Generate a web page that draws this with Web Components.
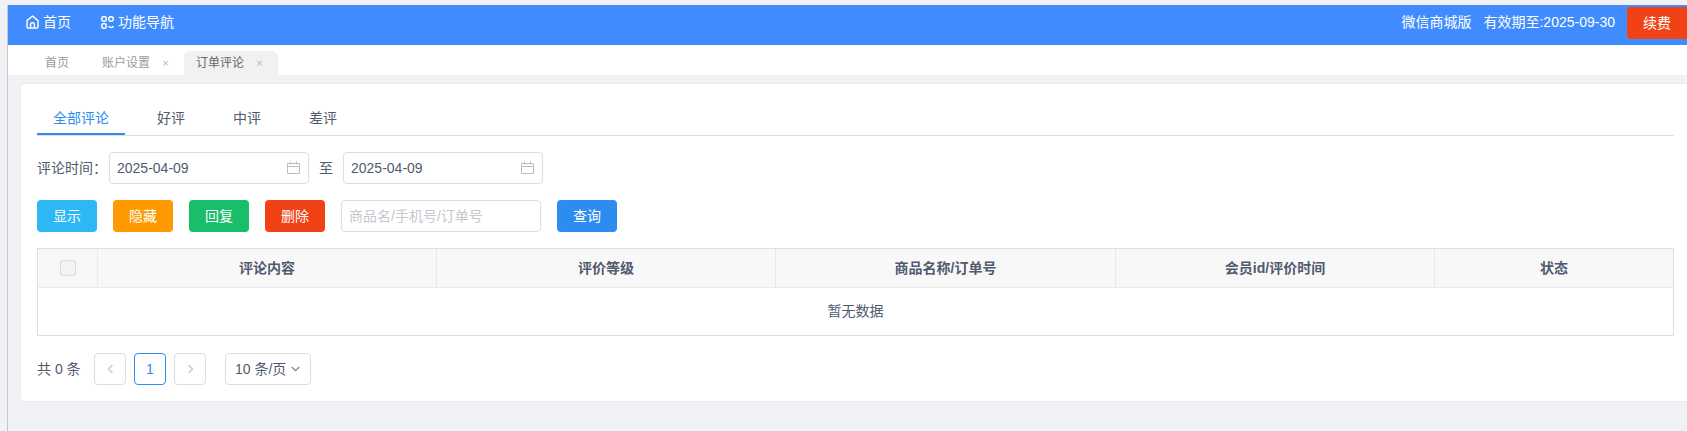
<!DOCTYPE html>
<html><head><meta charset="utf-8">
<style>
html,body{margin:0;padding:0;height:431px;overflow:hidden;background:#f0f2f5;}
body{font:14px/20px "Liberation Sans","Noto Sans CJK SC",sans-serif;color:#515a6e;}
app-shell{width:1687px;height:431px;}
</style></head><body>
<app-shell>
  <top-bar></top-bar>
  <tab-strip></tab-strip>
  <main-card>
    <card-tabs></card-tabs>
    <date-filter></date-filter>
    <action-row></action-row>
    <data-table></data-table>
    <pager-bar></pager-bar>
  </main-card>
</app-shell>
<script>
const def=(name,css,html)=>customElements.define(name,class extends HTMLElement{
  constructor(){super();this.attachShadow({mode:'open'}).innerHTML=`<style>${css}</style>${html}`;}
});
const CAL=`<svg width="13" height="13" viewBox="0 0 13 13" fill="none" stroke="#b9bdc6" stroke-width="1"><path d="M.5 2.5h12v10H.5zM.5 5.5h12M3.5.5v3M9.5.5v3"/></svg>`;

def('app-shell',`:host{display:block;box-sizing:border-box;padding-top:5px;padding-left:7px;background:#f0f2f5}
.w{border-left:1px solid #c6c8cc;height:426px;box-sizing:border-box;}
`,`<div class="w"><slot></slot></div>`);

def('top-bar',`:host{display:flex;height:40px;background:#408cff;color:#fff;font-size:14px;}
.l{display:flex;align-items:center;padding:0 0 6px 17px;}
.i{display:flex;align-items:center;gap:5px;}
.h{padding-left:1px;gap:4px}
.i+.i{margin-left:30px;gap:4px}
.r{margin-left:auto;display:flex;align-items:center;padding-bottom:6px;}
.b{margin-left:12px;margin-top:2px;width:60px;height:32px;background:#f14216;border-radius:3px 0 0 3px;display:flex;align-items:center;justify-content:center;}
.s{margin-left:12px}
svg{display:block}`,
`<div class="l"><div class="i h"><svg width="13" height="14" viewBox="0 0 13 14" fill="none" stroke="#fff" stroke-width="1.4" stroke-linejoin="round"><path d="M1 5.6 6.5 1 12 5.6V12a1 1 0 0 1-1 1H2a1 1 0 0 1-1-1z"/><path d="M4.6 13V9.6a1.9 1.9 0 0 1 3.8 0V13"/></svg><span>首页</span></div>
<div class="i"><svg width="13" height="13" viewBox="0 0 13 13" fill="none" stroke="#fff" stroke-width="1.5"><rect x=".8" y=".8" width="4.4" height="4.4" rx="1.4"/><rect x=".8" y="7.8" width="4.4" height="4.4" rx="1.4"/><circle cx="10" cy="3" r="2.3"/><path d="M7.6 10.2c1 1.8 3.8 1.8 4.8 0"/></svg><span>功能导航</span></div></div>
<div class="r"><span>微信商城版</span><span class="s">有效期至:2025-09-30</span><div class="b">续费</div></div>`);

def('tab-strip',`:host{display:flex;height:30px;background:#fff;font-size:12px;color:#9b9b9b;box-sizing:border-box;padding:6px 0 0 37px;align-items:stretch}
.t{display:flex;align-items:center;line-height:16px;}
.x{font-size:11px;color:#b5b5b5;margin-left:12px;width:7px;text-align:center}
.h{margin-right:33px}
.a{background:#f1f1f1;color:#666;border-radius:6px 6px 0 0;margin-left:15px;padding:0 15px 0 12px;}
`,`<div class="t h">首页</div><div class="t">账户设置<span class="x">×</span></div><div class="t a">订单评论<span class="x">×</span></div>`);

def('main-card',`:host{display:block;box-sizing:border-box;background:#fff;margin:8px 0 0 13px;width:1666px;height:319px;border-radius:4px 0 0 4px;border-bottom:1px solid #e8eaec;border-top:1px solid #e8eaec;padding:15px 13px 0 16px;}`,`<slot></slot>`);

def('card-tabs',`:host{display:flex;height:37px;box-sizing:border-box;border-bottom:1px solid #dcdee2;font-size:14px;}
.t{height:36px;box-sizing:border-box;line-height:38px;padding:0 24px;color:#515a6e}
.a{padding:0 16px;margin-right:8px;color:#2d8cf0;border-bottom:2px solid #2d8cf0}`,
`<div class="t a">全部评论</div><div class="t">好评</div><div class="t">中评</div><div class="t">差评</div>`);

def('date-filter',`:host{display:flex;align-items:center;height:32px;margin-top:16px}
.l{width:72px;white-space:nowrap}
.d{box-sizing:border-box;width:200px;height:32px;border:1px solid #dcdee2;border-radius:4px;padding:0 7px;display:flex;align-items:center;justify-content:space-between}
.z{width:34px;text-align:center}svg{display:block;margin:0 1px 1px 0}`,
`<span class="l">评论时间：</span><div class="d"><span>2025-04-09</span>${CAL}</div><span class="z">至</span><div class="d"><span>2025-04-09</span>${CAL}</div>`);

def('action-row',`:host{display:flex;align-items:center;height:32px;margin-top:16px}
.b{width:60px;height:32px;border-radius:4px;color:#fff;display:flex;align-items:center;justify-content:center;margin-right:16px}
.q{color:#c5c8ce;box-sizing:border-box;width:200px;height:32px;border:1px solid #dcdee2;border-radius:4px;padding:0 7px;display:flex;align-items:center;margin-right:16px}`,
`<div class="b" style="background:#2db7f5">显示</div><div class="b" style="background:#f90">隐藏</div><div class="b" style="background:#19be6b">回复</div><div class="b" style="background:#f14216">删除</div><div class="q">商品名/手机号/订单号</div><div class="b" style="background:#2d8cf0">查询</div>`);

def('data-table',`:host{display:block;box-sizing:border-box;margin-top:16px;width:1637px;height:88px;border:1px solid #dcdee2}
.h{display:grid;grid-template-columns:60px 339px 339px 340px 319px 1fr;height:38px;box-sizing:content-box;background:#f8f8f9;border-bottom:1px solid #e8eaec;font-weight:700;}
.h>div{display:flex;align-items:center;justify-content:center;border-right:1px solid #e8eaec}
.h>div:last-child{border-right:0}
.c{box-sizing:border-box;width:16px;height:16px;border:1px solid #dcdee2;border-radius:2px;background:#f3f3f3}
.e{height:47px;box-sizing:border-box;padding-bottom:2px;display:flex;align-items:center;justify-content:center}`,
`<div class="h"><div><span class="c"></span></div><div>评论内容</div><div>评价等级</div><div>商品名称/订单号</div><div>会员id/评价时间</div><div>状态</div></div><div class="e">暂无数据</div>`);

def('pager-bar',`:host{display:flex;align-items:center;height:32px;margin-top:17px}
.t{width:57px;white-space:nowrap}
.p{box-sizing:border-box;width:32px;height:32px;border:1px solid #dcdee2;border-radius:4px;display:flex;align-items:center;justify-content:center;margin-right:8px}
.a{border-color:#2d8cf0;color:#2d8cf0}
.s{box-sizing:border-box;width:86px;height:32px;border:1px solid #dcdee2;border-radius:4px;margin-left:11px;padding-left:9px;display:flex;align-items:center;gap:5px;white-space:nowrap}
svg{display:block}`,
`<span class="t">共 0 条</span><div class="p"><svg width="7" height="10" viewBox="0 0 7 10" fill="none" stroke="#c5c8ce" stroke-width="1.4"><path d="M5.5 1 1.5 5l4 4"/></svg></div><div class="p a">1</div><div class="p"><svg width="7" height="10" viewBox="0 0 7 10" fill="none" stroke="#c5c8ce" stroke-width="1.4"><path d="M1.5 1l4 4-4 4"/></svg></div><div class="s"><span>10 条/页</span><svg width="9" height="6" viewBox="0 0 9 6" fill="none" stroke="#808695" stroke-width="1.3"><path d="M.7 1l3.8 3.6L8.3 1"/></svg></div>`);
</script>
</body></html>
